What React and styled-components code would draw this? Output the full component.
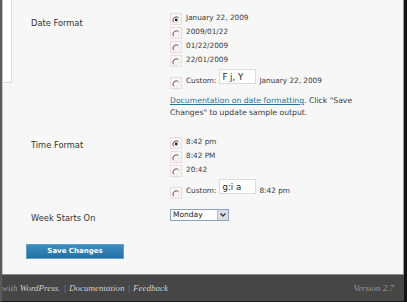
import React from "react";
import styled, { createGlobalStyle } from "styled-components";

const GlobalStyle = createGlobalStyle`
  html, body {
    margin: 0;
    padding: 0;
    background: #fff;
  }
  body {
    width: 407px;
    height: 306px;
    overflow: hidden;
    font-family: "DejaVu Sans", Verdana, sans-serif;
    color: #333;
  }
`;

const Window = styled.div`
  box-sizing: border-box;
  width: 407px;
  height: 302px;
  display: flex;
  flex-direction: column;
  border-left: 2px solid #5a5a5a;
  border-right: 3px solid #141414;
  border-bottom: 1px solid #1a1a1a;
`;

const Main = styled.div`
  flex: 1;
  display: flex;
  background: #f7f7f7;
  border-left: 1px solid #c4c4c4;
  border-right: 1px solid #9a9a9a;
  min-height: 0;
`;

const Sidebar = styled.div`
  width: 9px;
  flex-shrink: 0;
`;

const MenuStub = styled.div`
  height: 82px;
  background: #fff;
  border-right: 1px solid #dadada;
  border-bottom: 1px solid #dadada;
`;

const Content = styled.div`
  flex: 1;
  padding: 0 0 0 19px;
`;

const FormRow = styled.div`
  display: grid;
  grid-template-columns: 139px 1fr;
  margin-top: ${p => p.$top}px;
`;

const Label = styled.div`
  font-size: 8.3px;
  line-height: 10px;
  padding-top: ${p => p.$pad}px;
  color: #333;
`;

const Field = styled.div`
  display: flex;
  flex-direction: column;
`;

const Option = styled.div`
  display: flex;
  align-items: flex-start;
  height: 14px;
  gap: 4px;
`;

const OptionText = styled.span`
  font-size: 7.3px;
  line-height: 9px;
  margin-top: ${p => p.$top || 0}px;
  margin-left: ${p => p.$left || 0}px;
  color: #3a3a3a;
  white-space: nowrap;
`;

const CustomRow = styled.div`
  display: flex;
  align-items: flex-start;
  height: 19px;
`;

const RadioBox = styled.svg`
  flex-shrink: 0;
  margin-top: ${p => p.$top || 0}px;
`;

const FormatInput = styled.input`
  box-sizing: border-box;
  width: 37px;
  height: 15px;
  margin: 0 3px 0 3px;
  padding: 0 0 0 2px;
  border: 1px solid #dcdcdc;
  background: #fff;
  font-family: "DejaVu Sans", Verdana, sans-serif;
  font-size: 8.6px;
  color: #222;
  outline: none;
`;

const Description = styled.p`
  margin: 7px 0 0;
  font-size: 7.7px;
  line-height: 12px;
  color: #3a3a3a;
`;

const DocLink = styled.a`
  color: #21759b;
  text-decoration: underline;
`;

const Select = styled.div`
  box-sizing: border-box;
  width: 59px;
  height: 12px;
  display: flex;
  align-items: stretch;
  border: 1px solid #8aa2bf;
  background: #fff;
`;

const SelectValue = styled.span`
  flex: 1;
  font-size: 7.5px;
  line-height: 10px;
  padding-left: 2px;
  color: #222;
`;

const SelectArrow = styled.span`
  width: 10px;
  display: flex;
  align-items: center;
  justify-content: center;
  background: #d9dde6;
  border-left: 1px solid #b7c2d2;
`;

const SaveButton = styled.button`
  box-sizing: border-box;
  display: block;
  width: 98px;
  height: 15px;
  margin: 21px 0 0 -5px;
  padding: 0;
  border: 1px solid #5ea2cc;
  background: linear-gradient(#3a8cc0, #2470a4);
  color: #fff;
  font-family: "DejaVu Sans", Verdana, sans-serif;
  font-size: 7px;
  font-weight: bold;
  line-height: 13px;
`;

const Footer = styled.div`
  height: 26px;
  flex-shrink: 0;
  display: flex;
  align-items: center;
  justify-content: space-between;
  background: #464646;
  border-top: 1px solid #8c8c8c;
  padding: 0 10px 0 0;
  font-family: "Liberation Serif", "Times New Roman", serif;
  font-style: italic;
  font-size: 9px;
  color: #999;
  overflow: hidden;
`;

const FooterLeft = styled.span`
  margin-left: 0;
  white-space: nowrap;
`;

const FooterLink = styled.span`
  color: #cfcfcf;
`;

const Sep = styled.span`
  color: #888;
  margin: 0 3px;
`;

const Radio = ({ checked, top }) => (
  <RadioBox $top={top} width="12" height="12" viewBox="0 0 12 12">
    <rect x="0.5" y="0.5" width="11" height="11" fill="#faf6f6" stroke="#ecdcdc" />
    <path d="M8.6 4.6 A3.5 3.5 0 0 0 3.6 9.4" stroke="#555" strokeWidth="1" fill="none" />
    <path d="M3.6 9.4 A3.5 3.5 0 0 0 8.6 4.6" stroke="#e6e6e6" strokeWidth="1" fill="none" />
    {checked && <circle cx="6.2" cy="7" r="1.4" fill="#222" />}
  </RadioBox>
);

const RadioOption = ({ checked, children }) => (
  <Option>
    <Radio checked={checked} />
    <OptionText>{children}</OptionText>
  </Option>
);

const CustomFormat = ({ format, sample }) => (
  <CustomRow>
    <Radio top={8} />
    <OptionText $top={7} $left={4}>Custom:</OptionText>
    <FormatInput readOnly value={format} />
    <OptionText $top={7}>{sample}</OptionText>
  </CustomRow>
);

export default function App() {
  return (
    <>
      <GlobalStyle />
      <Window>
        <Main>
          <Sidebar>
            <MenuStub />
          </Sidebar>
          <Content>
            <FormRow $top={13}>
              <Label $pad={5}>Date Format</Label>
              <Field>
                <RadioOption checked>January 22, 2009</RadioOption>
                <RadioOption>2009/01/22</RadioOption>
                <RadioOption>01/22/2009</RadioOption>
                <RadioOption>22/01/2009</RadioOption>
                <CustomFormat format="F j, Y" sample="January 22, 2009" />
                <Description>
                  <DocLink href="#">Documentation on date formatting</DocLink>. Click "Save
                  <br />
                  Changes" to update sample output.
                </Description>
              </Field>
            </FormRow>
            <FormRow $top={18}>
              <Label $pad={3}>Time Format</Label>
              <Field>
                <RadioOption checked>8:42 pm</RadioOption>
                <RadioOption>8:42 PM</RadioOption>
                <RadioOption>20:42</RadioOption>
                <CustomFormat format="g:i a" sample="8:42 pm" />
              </Field>
            </FormRow>
            <FormRow $top={11}>
              <Label $pad={4}>Week Starts On</Label>
              <Field>
                <Select>
                  <SelectValue>Monday</SelectValue>
                  <SelectArrow>
                    <svg width="6" height="4" viewBox="0 0 6 4">
                      <path d="M0.5 0.5 L3 3 L5.5 0.5" stroke="#333" strokeWidth="1.3" fill="none" />
                    </svg>
                  </SelectArrow>
                </Select>
              </Field>
            </FormRow>
            <SaveButton>Save Changes</SaveButton>
          </Content>
        </Main>
        <Footer>
          <FooterLeft>
            with <FooterLink>WordPress.</FooterLink>
            <Sep>|</Sep>
            <FooterLink>Documentation</FooterLink>
            <Sep>|</Sep>
            <FooterLink>Feedback</FooterLink>
          </FooterLeft>
          <span>Version 2.7</span>
        </Footer>
      </Window>
    </>
  );
}
